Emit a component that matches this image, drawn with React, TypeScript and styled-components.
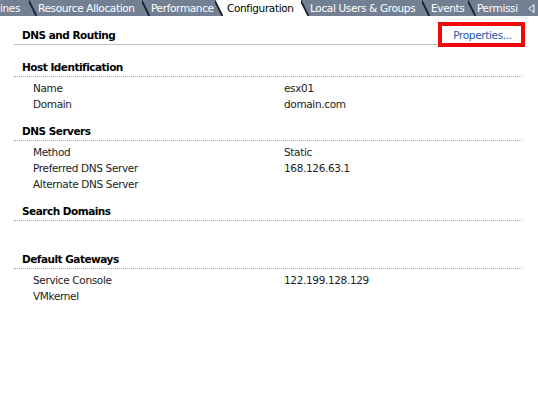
import React from "react";
import styled, { createGlobalStyle } from "styled-components";

const TAB_BG = "#737f93";
const ACTIVE_BG = "#ffffff";
const EDGE = "#1e2430";

const Global = createGlobalStyle`
  html, body { margin: 0; padding: 0; background: #ffffff; }
  body {
    font-family: "DejaVu Sans", "Liberation Sans", sans-serif;
    font-size: 10.5px;
    letter-spacing: -0.35px;
    color: #1c1c1c;
  }
`;

const Page = styled.div`
  width: 538px;
  height: 394px;
  overflow: hidden;
  background: #ffffff;
`;

const TabBar = styled.div`
  display: flex;
  height: 16px;
  background: ${TAB_BG};
  overflow: hidden;
`;

const Tab = styled.div<{ $w: number; $active?: boolean; $pl?: number }>`
  flex: 0 0 ${(p) => p.$w}px;
  width: ${(p) => p.$w}px;
  height: 16px;
  line-height: 16px;
  padding-left: ${(p) => p.$pl ?? 1}px;
  box-sizing: border-box;
  white-space: nowrap;
  overflow: hidden;
  background: ${(p) => (p.$active ? ACTIVE_BG : TAB_BG)};
  color: ${(p) => (p.$active ? "#000000" : "#ffffff")};
`;

const SepSvg = styled.svg`
  flex: 0 0 8px;
  display: block;
`;

const Separator = ({ left, right }: { left: string; right: string }) => (
  <SepSvg width="8" height="16" viewBox="0 0 8 16">
    <polygon points="0,0 8,16 0,16" fill={left} />
    <polygon points="0,0 8,0 8,16" fill={right} />
    <line x1="-0.6" y1="0" x2="7.4" y2="16" stroke={EDGE} strokeWidth="1.9" />
  </SepSvg>
);

const ArrowCell = styled.div`
  flex: 1 1 auto;
  display: flex;
  align-items: center;
  justify-content: center;
  background: ${TAB_BG};
`;

const Content = styled.div`
  padding: 10px 16px 0 14px;
`;

const HeaderRow = styled.div`
  display: flex;
  align-items: flex-end;
  justify-content: space-between;
  height: 18px;
  border-bottom: 1px solid #c3c3c3;
  padding-left: 8px;
`;

const Title = styled.div`
  font-weight: bold;
  line-height: 18px;
  letter-spacing: -0.5px;
  color: #000000;
  align-self: center;
`;

const PropertiesLink = styled.a`
  display: flex;
  align-items: center;
  justify-content: center;
  box-sizing: border-box;
  width: 87px;
  height: 25px;
  margin-bottom: -3px;
  margin-right: -3px;
  padding-left: 2px;
  border: 4px solid #ee0a0a;
  background: #ffffff;
  color: #2458b0;
  text-decoration: none;
  cursor: pointer;
`;

const Sections = styled.div`
  margin-top: 13px;
`;

const SectionHeading = styled.div`
  height: 18px;
  line-height: 18px;
  padding-left: 8px;
  font-weight: bold;
  letter-spacing: -0.5px;
  color: #000000;
  border-bottom: 1px dotted #a8a8a8;
`;

const Rows = styled.div`
  display: grid;
  grid-template-columns: 251px 1fr;
  grid-auto-rows: 16px;
  min-height: 16px;
  padding: 3px 0 10px 19px;
`;

const Cell = styled.div`
  line-height: 16px;
  white-space: nowrap;
`;

type Section = { title: string; rows: [string, string][] };

const sections: Section[] = [
  {
    title: "Host Identification",
    rows: [
      ["Name", "esx01"],
      ["Domain", "domain.com"],
    ],
  },
  {
    title: "DNS Servers",
    rows: [
      ["Method", "Static"],
      ["Preferred DNS Server", "168.126.63.1"],
      ["Alternate DNS Server", ""],
    ],
  },
  { title: "Search Domains", rows: [] },
  {
    title: "Default Gateways",
    rows: [
      ["Service Console", "122.199.128.129"],
      ["VMkernel", ""],
    ],
  },
];

type TabDef = { label: string; w: number; active?: boolean; pl?: number };

const tabs: TabDef[] = [
  { label: "ines", w: 29, pl: 0 },
  { label: "Resource Allocation", w: 105 },
  { label: "Performance", w: 65 },
  { label: "Configuration", w: 78, active: true, pl: 4 },
  { label: "Local Users & Groups", w: 113 },
  { label: "Events", w: 38 },
  { label: "Permissi", w: 49 },
];

export default function App() {
  return (
    <Page>
      <Global />
      <TabBar>
        {tabs.map((t, i) => (
          <React.Fragment key={t.label}>
            {i > 0 && (
              <Separator
                left={tabs[i - 1].active ? ACTIVE_BG : TAB_BG}
                right={t.active ? ACTIVE_BG : TAB_BG}
              />
            )}
            <Tab $w={t.w} $active={t.active} $pl={t.pl}>
              {t.label}
            </Tab>
          </React.Fragment>
        ))}
        <ArrowCell>
          <svg width="7" height="9" viewBox="0 0 7 9">
            <polygon points="6,0.5 6,8.5 0.8,4.5" fill="none" stroke="#ffffff" strokeWidth="1" />
          </svg>
        </ArrowCell>
      </TabBar>
      <Content>
        <HeaderRow>
          <Title>DNS and Routing</Title>
          <PropertiesLink>Properties...</PropertiesLink>
        </HeaderRow>
        <Sections>
          {sections.map((s) => (
            <div key={s.title}>
              <SectionHeading>{s.title}</SectionHeading>
              <Rows>
                {s.rows.map(([k, v]) => (
                  <React.Fragment key={k}>
                    <Cell>{k}</Cell>
                    <Cell>{v}</Cell>
                  </React.Fragment>
                ))}
              </Rows>
            </div>
          ))}
        </Sections>
      </Content>
    </Page>
  );
}
